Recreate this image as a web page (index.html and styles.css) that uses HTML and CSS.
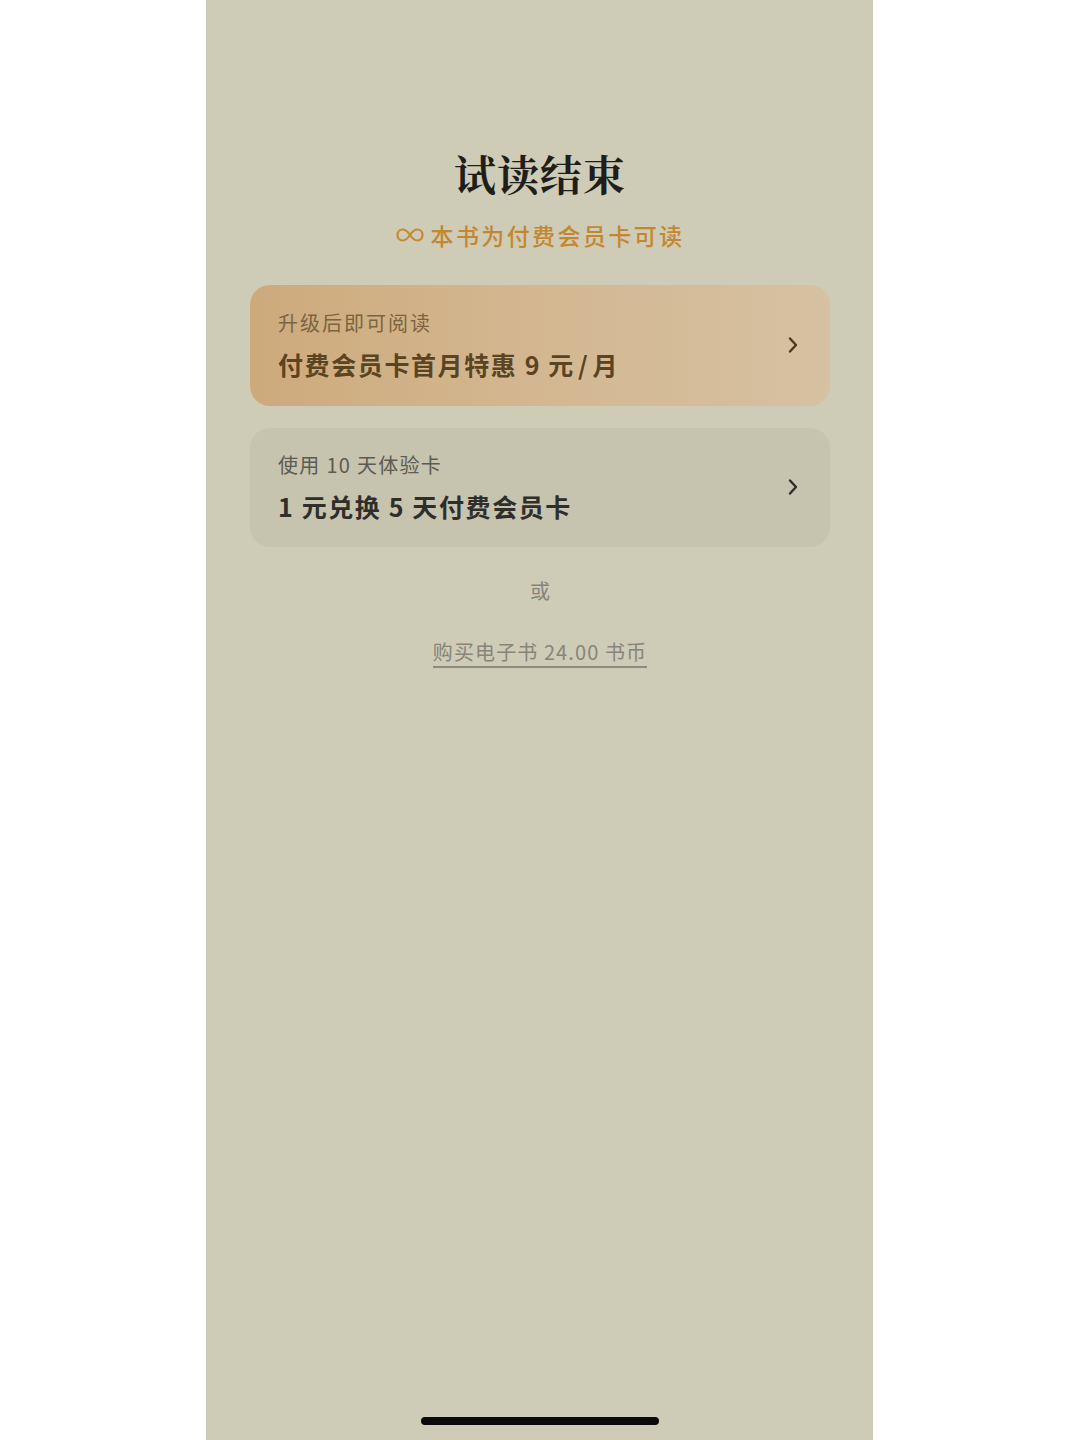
FILE: index.html
```html
<!DOCTYPE html>
<html lang="zh-CN">
<head>
<meta charset="utf-8">
<title>试读结束</title>
<link rel="stylesheet" href="styles.css">
</head>
<body>
<div class="panel">
  <h1 class="title">试读结束</h1>
  <div class="subtitle">
    <svg class="inf" width="28" height="16" viewBox="0 0 28 16" aria-hidden="true">
      <path d="M14 8 C11 3.5 8.5 2.5 6.5 2.5 C3.5 2.5 1.5 5 1.5 8 C1.5 11 3.5 13.5 6.5 13.5 C8.5 13.5 11 12.5 14 8 C17 3.5 19.5 2.5 21.5 2.5 C24.5 2.5 26.5 5 26.5 8 C26.5 11 24.5 13.5 21.5 13.5 C19.5 13.5 17 12.5 14 8 Z" fill="none" stroke="#c58a32" stroke-width="2.2"/>
    </svg>
    <span>本书为付费会员卡可读</span>
  </div>

  <div class="card card-gold">
    <div class="card-text">
      <div class="label">升级后即可阅读</div>
      <div class="main">付费会员卡首月特惠 9 元&#8202;/&#8202;月</div>
    </div>
    <svg class="chev" width="12" height="18" viewBox="0 0 12 18" aria-hidden="true">
      <path d="M3 2.5 L9 9 L3 15.5" fill="none" stroke="#4a3a1e" stroke-width="2.4" stroke-linecap="round" stroke-linejoin="round"/>
    </svg>
  </div>

  <div class="card card-grey">
    <div class="card-text">
      <div class="label">使用 10 天体验卡</div>
      <div class="main">1 元兑换 5 天付费会员卡</div>
    </div>
    <svg class="chev" width="12" height="18" viewBox="0 0 12 18" aria-hidden="true">
      <path d="M3 2.5 L9 9 L3 15.5" fill="none" stroke="#2e2e2a" stroke-width="2.4" stroke-linecap="round" stroke-linejoin="round"/>
    </svg>
  </div>

  <div class="or">或</div>
  <div class="buy"><a class="buy-link">购买电子书 24.00 书币</a></div>

  <div class="home-bar"></div>
</div>
</body>
</html>
```

FILE: styles.css
```css
html, body {
  margin: 0;
  padding: 0;
  background: #ffffff;
}

body {
  font-family: "Noto Sans CJK SC", "Noto Sans", sans-serif;
}

.panel {
  width: 667px;
  min-height: 1440px;
  margin-left: 206px;
  background: #cecbb6;
  box-sizing: border-box;
  padding: 145px 43px 15px 44px;
  display: flex;
  flex-direction: column;
}

.title {
  margin: 0;
  text-align: center;
  font-family: "Noto Serif CJK SC", "Source Han Serif SC", "Noto Sans CJK SC", serif;
  font-size: 42px;
  line-height: 56px;
  font-weight: 700;
  color: #1f1e1b;
  letter-spacing: 1px;
}

.subtitle {
  margin-top: 17px;
  height: 34px;
  display: flex;
  align-items: center;
  justify-content: center;
  gap: 7px;
  color: #c3882f;
  font-size: 23px;
  font-weight: 500;
  letter-spacing: 2.4px;
}

.inf {
  display: block;
}

.card {
  border-radius: 20px;
  padding: 24px 28px 25px 28px;
  display: flex;
  align-items: center;
  justify-content: space-between;
}

.card-gold {
  margin-top: 33px;
  background: linear-gradient(90deg, #cdaa7c 0%, #d3b68f 45%, #d6c1a2 100%);
}

.card-grey {
  margin-top: 22px;
  background: #c6c3ae;
  padding-top: 23px;
  padding-bottom: 24px;
}

.card-text {
  display: flex;
  flex-direction: column;
  gap: 10px;
}

.label {
  font-size: 20px;
  line-height: 28px;
  letter-spacing: 1.3px;
}

.main {
  font-size: 25px;
  line-height: 34px;
  font-weight: 700;
  letter-spacing: 1.6px;
}

.card-gold .label { color: #7b6440; letter-spacing: 2px; }
.card-gold .main { color: #5b4421; }
.card-grey .label { color: #5d5b52; }
.card-grey .main { color: #2f2e2a; }

.chev {
  display: block;
  margin-right: 3px;
}

.or {
  margin-top: 30px;
  text-align: center;
  font-size: 20px;
  line-height: 28px;
  color: #85837a;
}

.buy {
  margin-top: 34px;
  text-align: center;
}

.buy-link {
  display: inline-block;
  font-size: 20px;
  line-height: 26px;
  color: #87857a;
  letter-spacing: 1.1px;
  border-bottom: 2px solid #8d8b80;
  padding-bottom: 1px;
}

.home-bar {
  margin-top: auto;
  align-self: center;
  width: 238px;
  height: 8px;
  border-radius: 4px;
  background: #0a0a0a;
}
```
